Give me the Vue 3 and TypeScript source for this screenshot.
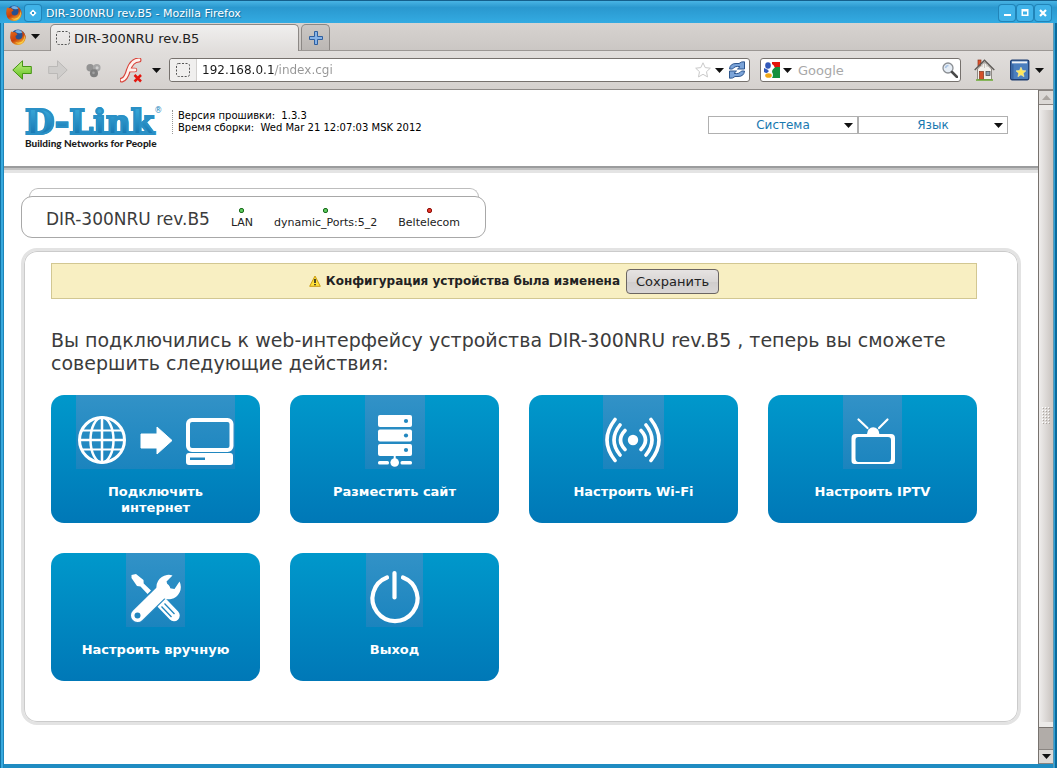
<script setup lang="ts">
import { ref } from 'vue'

type IconName = 'internet' | 'server' | 'wifi' | 'tv' | 'tools' | 'power'

interface Tile {
  icon: IconName
  label: string
  width: number
}

interface Link {
  name: string
  up: boolean
}

const address = ref('192.168.0.1/index.cgi')
const query = ref('')

const links: Link[] = [
  { name: 'LAN', up: true },
  { name: 'dynamic_Ports:5_2', up: true },
  { name: 'Beltelecom', up: false },
]

const tiles: Tile[] = [
  { icon: 'internet', label: 'Подключить интернет', width: 159 },
  { icon: 'server', label: 'Разместить сайт', width: 60 },
  { icon: 'wifi', label: 'Настроить Wi-Fi', width: 61 },
  { icon: 'tv', label: 'Настроить IPTV', width: 59 },
  { icon: 'tools', label: 'Настроить вручную', width: 59 },
  { icon: 'power', label: 'Выход', width: 57 },
]

const menus: string[] = ['Система', 'Язык']
</script>

<template>
  <div class="window">
    <svg class="defs" aria-hidden="true">
      <defs>
        <linearGradient id="fox" x1="0" y1="0" x2="0.6" y2="1">
          <stop offset="0" stop-color="#e8701a" />
          <stop offset="0.6" stop-color="#c8400c" />
          <stop offset="1" stop-color="#f7b52c" />
        </linearGradient>
        <linearGradient id="leaf" x1="0" y1="0" x2="0" y2="1">
          <stop offset="0" stop-color="#c4f089" />
          <stop offset="1" stop-color="#5fc01b" />
        </linearGradient>
        <symbol id="firefox" viewBox="0 0 16 16">
          <circle cx="8" cy="8" r="7.5" fill="#27508f" />
          <path d="M5 2Q9-.5 13 3Q11 5 8 4Q6 4 5 2Z" fill="#6fb1e6" />
          <path d="M1 2.500Q3 3.500 4.500 3Q6 3 7.500 5.500L5.500 7Q5.500 10.500 9 10.500Q12.500 10 12.500 6Q12.500 3.500 11 1.500Q15.800 4 15.700 9Q14.500 15.500 8 16Q1 15.500.3 9Q0 5 1 2.500Z" fill="url(#fox)" />
          <path d="M14 4Q15.500 9 12 12.500Q9 14.500 5 13Q8 16 12 14Q16.500 10.500 14 4Z" fill="#f9cf4a" />
        </symbol>
        <symbol id="caret" viewBox="0 0 9 5">
          <path d="M0 0H9L4.500 5Z" fill="currentColor" />
        </symbol>
      </defs>
    </svg>

    <header class="titlebar">
      <svg class="i16"><use href="#firefox" /></svg>
      <button class="wm" aria-label="Все рабочие столы">
        <svg viewBox="0 0 16 16"><path d="M8 4.500L11.500 8L8 11.500L4.500 8Z" fill="#fff" /><rect x="7" y="7" width="2" height="2" fill="#2793cf" /></svg>
      </button>
      <span class="caption">DIR-300NRU rev.B5 - Mozilla Firefox</span>
      <button class="wm" aria-label="Свернуть">
        <svg viewBox="0 0 16 16"><rect x="5" y="9" width="7" height="2" fill="#fff" /></svg>
      </button>
      <button class="wm" aria-label="Развернуть">
        <svg viewBox="0 0 16 16"><path d="M4.500 4H11.500V11H4.500ZM6 6.500V9.500H10V6.500Z" fill="#fff" fill-rule="evenodd" /></svg>
      </button>
      <button class="wm" aria-label="Закрыть">
        <svg viewBox="0 0 16 16"><path d="M5 5L11 11M11 5L5 11" stroke="#fff" stroke-width="2.200" /></svg>
      </button>
    </header>

    <div class="frame">
      <nav class="tabs">
        <button class="app-menu" aria-label="Firefox">
          <svg class="i16"><use href="#firefox" /></svg>
          <svg class="caret"><use href="#caret" /></svg>
        </button>
        <button class="tab">
          <svg class="i14" viewBox="0 0 14 14"><rect x=".5" y=".5" width="13" height="13" rx="2" fill="none" stroke="#555" stroke-dasharray="2 1.500" /></svg>
          DIR-300NRU rev.B5
        </button>
        <button class="tab-new" aria-label="Новая вкладка">
          <svg class="i14" viewBox="0 0 14 14"><path d="M5.500.5H8.500V5.500H13.500V8.500H8.500V13.500H5.500V8.500H.5V5.500H5.500Z" fill="#86b2e6" stroke="#2f5f9f" /></svg>
        </button>
      </nav>

      <div class="toolbar">
        <button class="tool back" aria-label="Назад">
          <svg viewBox="0 0 20 20"><path d="M.8 10L10.500.8V6.500H19.300V13.500H10.500V19.200Z" fill="url(#leaf)" stroke="#459413" /></svg>
        </button>
        <button class="tool forward" aria-label="Вперёд">
          <svg viewBox="0 0 20 20"><path d="M19.200 10L9.500.8V6.500H.7V13.500H9.500V19.200Z" fill="#cfcdcb" stroke="#bbb9b7" /></svg>
        </button>
        <button class="tool small" aria-label="Дополнение">
          <svg viewBox="0 0 16 16"><circle cx="4.500" cy="5" r="4" fill="#939393" /><circle cx="11.500" cy="5" r="4" fill="#a6a6a6" /><circle cx="8.500" cy="11" r="4.300" fill="#7f7f7f" /><circle cx="11.800" cy="5" r="1.600" fill="#d0d0d0" /><circle cx="8" cy="10.500" r="1.400" fill="#a2a2a2" /></svg>
        </button>
        <button class="tool flash" aria-label="Flash">
          <svg viewBox="0 0 24 25"><path d="M2 22Q6 21 8.500 12Q12 2 19 2" fill="none" stroke="#d8433a" stroke-width="5" stroke-linecap="round" /><path d="M9 12H15" stroke="#d8433a" stroke-width="4.500" stroke-linecap="round" /><path d="M2 22Q6 21 8.500 12Q12 2 19 2M9 12H15" fill="none" stroke="#fff2ee" stroke-width="2.800" stroke-linecap="round" /><path d="M14.500 17L21 23.500M21 17L14.500 23.500" stroke="#e3170f" stroke-width="2.500" /></svg>
          <svg class="caret"><use href="#caret" /></svg>
        </button>
        <label class="field address">
          <span class="identity"><svg class="i14" viewBox="0 0 14 14"><rect x=".5" y=".5" width="13" height="13" rx="2" fill="none" stroke="#555" stroke-dasharray="2 1.500" /></svg></span>
          <input v-model="address" class="url" type="text" aria-label="Адрес" />
          <svg class="i16" viewBox="0 0 16 16"><path d="M8 .8L10.200 5.600L15.300 6.200L11.500 9.700L12.500 14.900L8 12.300L3.500 14.900L4.500 9.700L.7 6.200L5.800 5.600Z" fill="#fff" stroke="#c9c9c9" /></svg>
          <svg class="caret"><use href="#caret" /></svg>
          <svg class="i18" viewBox="0 0 18 18"><path d="M1.500 8Q2 2.500 8 2.500H11L13.500 1L16.500 .8V8H9.500L12 5.700Q7 4.500 4.500 8ZM16.500 10Q16 15.500 10 15.500H7L4.500 17L1.500 17.200V10H8.500L6 12.300Q11 13.500 13.500 10Z" fill="#7ba4d9" stroke="#2f578f" /></svg>
        </label>
        <label class="field search">
          <svg class="i16" viewBox="0 0 16 16"><rect width="16" height="16" fill="#fff" /><path d="M8 0H16V6H11Q10 3 8 2Z" fill="#e4150b" /><path d="M16 5V16H8Q10 13 8 10Q8 7 12 5Z" fill="#13913d" /><ellipse cx="4" cy="3.500" rx="2.800" ry="3.300" fill="#3158b9" /><path d="M0 6Q3 7 5 9L3 11Q1 11 0 10Z" fill="#3158b9" /><ellipse cx="4.500" cy="13.500" rx="3.300" ry="2.300" fill="#f0a715" /></svg>
          <svg class="caret"><use href="#caret" /></svg>
          <input v-model="query" class="query" type="text" placeholder="Google" aria-label="Поиск" />
          <svg class="i16" viewBox="0 0 16 16"><circle cx="6" cy="6" r="5" fill="#e6edf5" stroke="#8b8f94" stroke-width="1.300" /><path d="M3.500 6Q4 3.500 6.500 3.500" fill="none" stroke="#a9c4e4" stroke-width="1.500" /><path d="M10 10L15 15" stroke="#4a4a4a" stroke-width="2.500" stroke-linecap="round" /></svg>
        </label>
        <button class="tool home" aria-label="Домой">
          <svg viewBox="0 0 21 22"><rect x="4" y="1" width="3" height="6" fill="#e0522c" stroke="#8a3218" stroke-width=".7" /><path d="M3.500 10V20.500H17.500V10L10.500 3Z" fill="#f2efea" stroke="#8f8a84" /><path d="M.7 11L10.500 1.200L20.300 11" fill="none" stroke="#5e5a56" stroke-width="1.400" /><path d="M8 8V5M10.500 9V4M13 8V5" stroke="#c9c5bf" /><rect x="5.500" y="12.500" width="4" height="8" fill="#d4502a" stroke="#80321a" stroke-width=".7" /><rect x="12" y="12.500" width="4" height="4" fill="#8ba0b3" stroke="#4c5258" stroke-width=".8" /><path d="M2 21H19" stroke="#6bab33" stroke-width="1.500" /></svg>
        </button>
        <button class="tool marks" aria-label="Закладки">
          <svg viewBox="0 0 21 22"><rect x=".7" y=".7" width="19" height="20.500" rx="1.500" fill="#4b7fbe" stroke="#1f3f73" stroke-width="1.400" /><path d="M2 2H18V4H2Z" fill="#f0f2f5" /><path d="M3 5V20.500" stroke="#2d5a97" /><path d="M11.500 8L13 11.500L16.700 11.900L13.900 14.400L14.700 18L11.500 16.100L8.300 18L9.100 14.400L6.300 11.900L10 11.500Z" fill="#ffe75a" stroke="#fff4a8" stroke-width=".6" /></svg>
          <svg class="caret"><use href="#caret" /></svg>
        </button>
      </div>

      <div class="viewport">
        <main class="page">
          <header class="site-head">
            <div class="logo">
              <div class="logo-row"><span class="logo-name">D-Link</span><sup>®</sup></div>
              <div class="logo-tag">Building Networks for People</div>
            </div>
            <div class="build">
              <div>Версия прошивки: &nbsp;1.3.3</div>
              <div>Время сборки: &nbsp;Wed Mar 21 12:07:03 MSK 2012</div>
            </div>
            <div class="menus">
              <label v-for="menu in menus" :key="menu" class="menu">
                <select :aria-label="menu"><option>{{ menu }}</option></select>
                <svg class="caret"><use href="#caret" /></svg>
              </label>
            </div>
          </header>

          <div class="body">
            <section class="device-stack">
              <div class="device-back"></div>
              <div class="device">
                <span class="device-name">DIR-300NRU rev.B5</span>
                <span v-for="link in links" :key="link.name" class="link">
                  <i class="led" :class="{ down: !link.up }"></i>
                  <span>{{ link.name }}</span>
                </span>
              </div>
            </section>

            <section class="card">
              <div class="notice">
                <svg class="warn" viewBox="0 0 12 12"><path d="M6 1L11.300 11.300H.7Z" fill="#ffe23a" stroke="#c99a12" stroke-linejoin="round" /><path d="M6 4V8M6 9V10.300" stroke="#222" stroke-width="1.600" /></svg>
                <strong>Конфигурация устройства была изменена</strong>
                <button class="save">Сохранить</button>
              </div>

              <h1>Вы подключились к web-интерфейсу устройства DIR-300NRU rev.B5 , теперь вы сможете совершить следующие действия:</h1>

              <div class="tiles">
                <a v-for="tile in tiles" :key="tile.icon" class="tile" href="#">
                  <svg class="pic" :width="tile.width" height="74" fill="none" stroke="#fff">
                    <g v-if="tile.icon === 'internet'">
                      <g stroke-width="2.500">
                        <circle cx="26" cy="45" r="22.500" stroke-width="3" />
                        <ellipse cx="26" cy="45" rx="11.500" ry="22.500" />
                        <path d="M26 22V68M3 45H49" />
                        <path d="M6 35.500H46M6 54.500H46" stroke-width="2" />
                      </g>
                      <path d="M65 39H81V32L96 45.500L81 59V53H65Z" fill="#fff" stroke="#fff" stroke-linejoin="round" />
                      <rect x="112" y="25" width="43.500" height="30" rx="4" stroke-width="4" />
                      <rect x="110" y="58" width="47" height="12" rx="3" fill="#fff" stroke="none" />
                      <rect x="114" y="62.500" width="15" height="2.500" fill="#2287bf" stroke="none" />
                    </g>
                    <g v-else-if="tile.icon === 'server'" fill="#fff" stroke="none">
                      <g v-for="row in 3" :key="row">
                        <rect x="13" :y="5.500 + row * 14.500" width="34" height="12" rx="2" />
                        <circle cx="41" :cy="11.500 + row * 14.500" r="2.100" fill="#2287bf" />
                      </g>
                      <path d="M28.700 60H30.700V66H28.700Z" />
                      <circle cx="29.700" cy="67.500" r="4.300" />
                      <rect x="13" y="66" width="11" height="3.500" rx="1.500" />
                      <rect x="35.500" y="66" width="11.500" height="3.500" rx="1.500" />
                    </g>
                    <g v-else-if="tile.icon === 'wifi'" stroke-width="3.600" stroke-linecap="round">
                      <circle cx="30" cy="45" r="5.200" fill="#fff" stroke="none" />
                      <path d="M38 35.500Q47 45 38 54.500M43 30Q55 45 43 60M48 24.500Q64 45 48 65.500" />
                      <path d="M22 35.500Q13 45 22 54.500M17 30Q5 45 17 60M12 24.500Q-4 45 12 65.500" />
                    </g>
                    <g v-else-if="tile.icon === 'tv'">
                      <path fill-rule="evenodd" d="M12.500 39H48Q52 39 52 43V66Q52 69 49 69H11.500Q8.500 69 8.500 66V43Q8.500 39 12.500 39ZM15.500 42Q12.500 42 12.500 45V63Q12.500 67 15.500 67H45Q48 67 48 63V45Q48 42 45 42Z" fill="#fff" stroke="none" />
                      <path d="M24 39A6.200 6.800 0 0 1 36.400 39Z" fill="#fff" stroke="none" />
                      <path d="M15.500 24.500L24.500 33M44.500 24.500L36 33" stroke-width="2.200" stroke-linecap="round" />
                    </g>
                    <g v-else-if="tile.icon === 'tools'">
                      <path d="M5.500 22L10 21L17.500 27L17.700 30.500L25 37.500L21.500 41L14.500 33.500L11 33L5.500 25Z" fill="#fff" stroke="none" />
                      <path d="M36 50L48 62.500" stroke-width="11.500" stroke-linecap="round" />
                      <path d="M35.500 53.500L45.500 64M38.500 50.500L48.500 61" stroke="#2287bf" stroke-width="1.300" />
                      <path d="M11.500 62.500L40 34.500" stroke="#2a8bc3" stroke-width="15.500" stroke-linecap="round" />
                      <path d="M11.500 62.500L38 36.500" stroke-width="13" stroke-linecap="round" />
                      <path d="M46.500 22.500L40.500 28.500L42.500 35L48.500 36L53.500 28.500A12.200 12.200 0 1 1 46.500 22.500Z" fill="#fff" stroke="none" />
                      <circle cx="11.500" cy="62.500" r="3" fill="#2287bf" stroke="none" />
                    </g>
                    <g v-else stroke-width="4.200" stroke-linecap="round">
                      <path d="M28.500 20V44.500" />
                      <path d="M21 24.500A22.500 22.500 0 1 0 37 24.500" />
                    </g>
                  </svg>
                  <span class="tile-label">{{ tile.label }}</span>
                </a>
              </div>
            </section>
          </div>
        </main>

        <div class="scroll">
          <button class="step" aria-label="Вверх"><svg class="up" viewBox="0 0 9 5"><path d="M0 5H9L4.500 0Z" fill="#aaa5a0" /></svg></button>
          <div class="thumb">
            <svg viewBox="0 0 9 18"><path d="M0 .5H9M0 3.500H9M0 6.500H9M0 9.500H9M0 12.500H9M0 15.500H9" stroke="#fff" stroke-dasharray="1 2" /><path d="M1 1.500H9M1 4.500H9M1 7.500H9M1 10.500H9M1 13.500H9M1 16.500H9" stroke="#aaa49e" stroke-dasharray="1 2" /></svg>
          </div>
          <div class="trough"></div>
          <button class="step" aria-label="Вниз"><svg class="caret"><use href="#caret" /></svg></button>
        </div>
      </div>
    </div>
  </div>
</template>

<style>
body {
  margin: 0;
  background: #1c82b8;
}
</style>

<style scoped>
.window {
  min-height: 100vh;
  box-sizing: border-box;
  display: flex;
  flex-direction: column;
  padding: 0 4px 4px;
  border-radius: 4px 4px 0 0;
  background: linear-gradient(90deg, #1173a5 0 1px, #38a9de 1px 3px, #1d86ba 3px 4px, #1f8cc2 4px calc(100% - 4px), #5a99b5 calc(100% - 4px) calc(100% - 3px), #2f9fd4 calc(100% - 3px) calc(100% - 2px), #0b6a9c calc(100% - 2px));
  font-family: 'DejaVu Sans', sans-serif;
  color: #222;
}
.defs {
  position: absolute;
  width: 0;
  height: 0;
}
button {
  font: inherit;
  color: inherit;
  margin: 0;
  padding: 0;
  border: 0;
  background: none;
}
svg {
  display: block;
  flex: none;
}
.i14 { width: 14px; height: 14px; }
.i16 { width: 16px; height: 16px; }
.i18 { width: 18px; height: 18px; }
.caret { width: 9px; height: 5px; color: #111; }

.titlebar {
  display: flex;
  align-items: center;
  gap: 2px;
  height: 23px;
  margin: 0 -4px;
  padding: 2px 6px 0;
  box-sizing: border-box;
  border-top: 1px solid #155f8c;
  background: linear-gradient(#49b4e4, #2a98cf 30%, #33abe2);
}
.titlebar .i16 { margin-right: 1px; }
.caption {
  flex: 1;
  margin-left: 3px;
  font-size: 11px;
  color: #fff;
  text-shadow: 1px 1px 1px #156a98;
  white-space: nowrap;
}
.wm {
  width: 16px;
  height: 16px;
  border-radius: 3px;
  background: #3fb2e8;
  box-shadow: 0 0 0 1px #2184b8;
}
.wm svg { width: 16px; height: 16px; }

.frame {
  flex: 1;
  display: flex;
  flex-direction: column;
  background: #fff;
}
.tabs {
  display: flex;
  align-items: flex-end;
  height: 28px;
  box-sizing: border-box;
  border-bottom: 1px solid #9b9794;
  background: linear-gradient(#d7d3d0, #cbc7c4);
}
.app-menu {
  display: flex;
  align-items: center;
  align-self: center;
  gap: 5px;
  width: 46px;
  padding-left: 6px;
}
.tab {
  display: flex;
  align-items: center;
  gap: 4px;
  width: 249px;
  height: 27px;
  margin-bottom: -1px;
  padding-left: 5px;
  border: 1px solid #8c8885;
  border-bottom: 0;
  border-radius: 5px 5px 0 0;
  background: linear-gradient(#f0efee, #e1dedc);
  font-size: 13px;
}
.tab-new {
  display: flex;
  align-items: center;
  justify-content: center;
  width: 29px;
  height: 26px;
  margin-left: 2px;
  border: 1px solid #8c8885;
  border-bottom: 0;
  border-radius: 5px 5px 0 0;
  background: linear-gradient(#cbc7c4, #bbb7b4);
}

.toolbar {
  display: flex;
  align-items: center;
  height: 39px;
  padding: 0 9px 0 8px;
  box-sizing: border-box;
  border-bottom: 1px solid #8f8b88;
  background: linear-gradient(#e1dedc, #d5d1ce);
}
.tool {
  display: flex;
  align-items: center;
  gap: 5px;
}
.back svg, .forward svg { width: 20px; height: 20px; }
.forward { margin-left: 16px; }
.small { margin-left: 18px; }
.small svg { width: 15px; height: 15px; }
.flash { margin-left: 19px; gap: 8px; }
.flash svg:first-child { width: 24px; height: 25px; }
.home { margin-left: 13px; }
.home svg { width: 21px; height: 22px; }
.marks { margin-left: 15px; }
.marks svg:first-child { width: 20px; height: 22px; }

.field {
  display: flex;
  align-items: center;
  height: 24px;
  box-sizing: border-box;
  border: 1px solid #76716d;
  border-radius: 3px;
  background: #fff;
}
.field input {
  flex: 1;
  min-width: 0;
  padding: 0 5px;
  border: 0;
  outline: 0;
  background: none;
  font: 12px 'DejaVu Sans', sans-serif;
}
.address {
  flex: 1;
  gap: 4px;
  margin-left: 8px;
  padding-right: 3px;
}
.identity {
  display: flex;
  align-items: center;
  align-self: stretch;
  padding: 0 6px;
  border-right: 1px solid #d2d0ce;
  border-radius: 3px 0 0 3px;
  background: #f0efee;
}
.field .url {
  padding-left: 1px;
  color: transparent;
  caret-color: #222;
  background: linear-gradient(90deg, #1a1a1a 73px, #959595 73px);
  -webkit-background-clip: text;
  background-clip: text;
}
.search {
  width: 201px;
  gap: 3px;
  margin-left: 10px;
  padding: 0 2px 0 3px;
}
.field .query {
  padding-left: 3px;
  font-size: 13px;
}
.query::placeholder { color: #a8a8a8; }

.viewport {
  flex: 1;
  display: flex;
}
.page {
  flex: 1;
  min-width: 0;
  background: #fff;
}
.site-head {
  display: flex;
  align-items: flex-start;
  height: 76px;
  padding: 0 30px 0 21px;
  border-bottom: 2px solid #9b9c9d;
  box-shadow: 0 2px 0 #c2c2c2, 0 5px 0 #e4e4e4;
}
.logo {
  width: 147px;
  padding-top: 15px;
  white-space: nowrap;
}
.logo-row {
  display: flex;
  align-items: flex-start;
  height: 32px;
}
.logo-name {
  font: bold 34px/34px 'DejaVu Serif', serif;
  color: transparent;
  -webkit-text-stroke: 2px #2a90c6;
  paint-order: stroke;
  background: linear-gradient(#35a2d4 20%, #1878b2 85%);
  -webkit-background-clip: text;
  background-clip: text;
}
.logo sup {
  font-size: 8px;
  line-height: 12px;
  color: #2086bd;
}
.logo-tag {
  font: 900 10px/12px Lato, sans-serif;
  color: #1c1c1c;
}
.build {
  margin-top: 20px;
  padding-left: 5px;
  border-left: 1px dotted #999;
  font-size: 10px;
  line-height: 12px;
  color: #000;
  white-space: nowrap;
}
.menus {
  display: flex;
  margin: 26px 0 0 auto;
}
.menu {
  display: grid;
  align-items: center;
  width: 150px;
}
.menu > * { grid-area: 1 / 1; }
.menu select {
  appearance: none;
  width: 100%;
  height: 18px;
  padding: 0;
  border: 1px solid #b0b0b0;
  border-radius: 0;
  background: #fff;
  color: #1878b0;
  font: 12px/16px 'DejaVu Sans', sans-serif;
  text-align: center;
  text-align-last: center;
}
.menu .caret {
  justify-self: end;
  margin-right: 5px;
  pointer-events: none;
}

.body { padding: 20px 17px 39px; }
.device-stack { width: max-content; }
.device-back {
  height: 8px;
  margin: 0 7px -1px 8px;
  border: 1px solid #bdbdbd;
  border-bottom: 0;
  border-radius: 10px 10px 0 0;
}
.device {
  display: flex;
  align-items: center;
  gap: 21px;
  height: 42px;
  padding: 3px 25px 0 24px;
  box-sizing: border-box;
  border: 1px solid #a8a8a8;
  border-radius: 11px;
  background: #fff;
}
.device-name {
  font-size: 17px;
  color: #3c3c3c;
}
.link {
  display: flex;
  flex-direction: column;
  align-items: center;
  gap: 3px;
  font-size: 11px;
  line-height: 14px;
}
.led {
  width: 3px;
  height: 3px;
  border: 1px solid #176b1a;
  border-radius: 2px;
  background: #5fc95f;
}
.led.down {
  border-color: #8b0d06;
  background: #e8382b;
}

.card {
  margin-top: 10px;
  padding: 12px 41px 41px 27px;
  border: 3px solid #e3e3e3;
  border-radius: 16px;
  box-shadow: inset 0 0 0 1px #cbcbcb;
}
.notice {
  display: flex;
  align-items: center;
  justify-content: center;
  gap: 5px;
  height: 34px;
  border: 1px solid #d2c792;
  background: #f8efc2;
  font-size: 12px;
}
.warn { width: 12px; height: 12px; }
.save {
  height: 25px;
  margin-left: 1px;
  padding: 0 9px;
  border: 1px solid #6b6562;
  border-radius: 4px;
  background: linear-gradient(#e6e3e2, #d9d6d5 50%, #d0cdcc 51%, #d9d6d5);
  font-size: 13px;
}
h1 {
  margin: 30px 0 20px;
  font-size: 19px;
  font-weight: normal;
  line-height: 23px;
  color: #3c3c3c;
}
.tiles {
  display: grid;
  grid-template-columns: repeat(4, 1fr);
  gap: 30px;
}
.tile {
  display: flex;
  flex-direction: column;
  align-items: center;
  gap: 15px;
  height: 128px;
  border-radius: 13px;
  background: linear-gradient(#0098cb, #0078b7);
  color: #fff;
  text-decoration: none;
}
.pic {
  background: linear-gradient(#3292c7, #1b84be);
}
.tile-label {
  padding: 0 26px;
  font-size: 13px;
  font-weight: bold;
  line-height: 16px;
  text-align: center;
}

.scroll {
  display: flex;
  flex-direction: column;
  width: 15px;
  box-sizing: border-box;
  border-left: 1px solid #77726e;
}
.step {
  display: flex;
  align-items: center;
  justify-content: center;
  height: 15px;
  background: #dcd9d6;
  border-top: 1px solid #8a8581;
  border-bottom: 1px solid #8a8581;
}
.up { width: 9px; height: 5px; }
.thumb {
  flex: 1;
  display: flex;
  align-items: center;
  justify-content: center;
  border-top: 5px solid #eceae8;
  border-bottom: 5px solid #eceae8;
  background: linear-gradient(90deg, #efedec, #c8c3bf);
}
.thumb svg { width: 9px; height: 18px; }
.trough {
  height: 21px;
  border-top: 1px solid #77726e;
  background: #b1aca8;
}
</style>
